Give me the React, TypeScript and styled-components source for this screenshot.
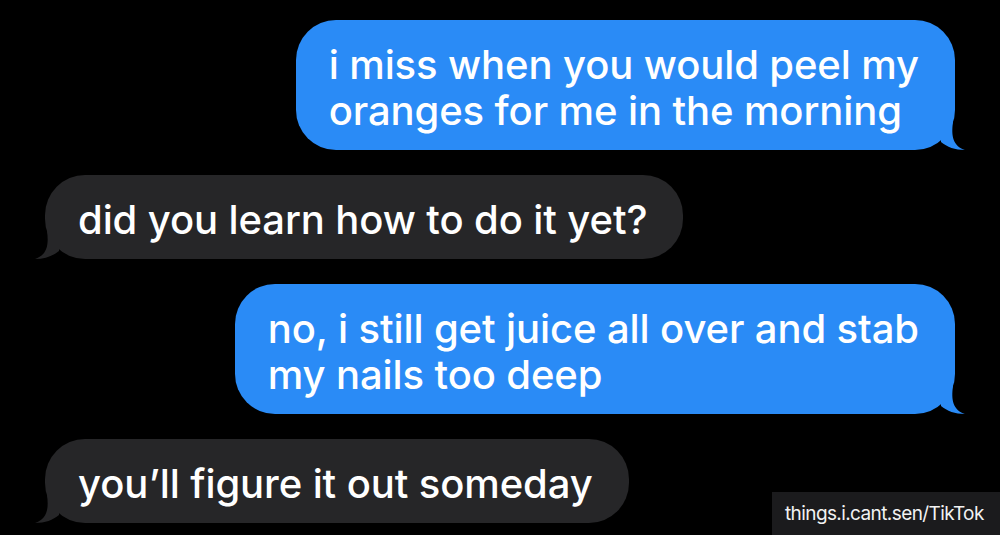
import React from "react";
import styled, { createGlobalStyle } from "styled-components";

const Global = createGlobalStyle`
  html, body { margin: 0; padding: 0; background: #000; }
  body { width: 1000px; height: 535px; overflow: hidden; }
`;

const Screen = styled.div`
  position: relative;
  width: 1000px;
  height: 535px;
  background: #000;
  box-sizing: border-box;
  padding: 20px 45px 0 45px;
  display: flex;
  flex-direction: column;
  gap: 25px;
  font-family: Inter, "Noto Sans", sans-serif;
`;

const Row = styled.div<{ $out?: boolean }>`
  display: flex;
  justify-content: ${(p) => (p.$out ? "flex-end" : "flex-start")};
`;

const Bubble = styled.div<{ $out?: boolean }>`
  position: relative;
  background: ${(p) => (p.$out ? "#2a8bf6" : "#262628")};
  color: #fff;
  border-radius: 40px;
  padding: 22px 36px 16px 33px;
  font-size: 40px;
  line-height: 46px;
  letter-spacing: -0.1px;
  font-weight: 500;
  white-space: nowrap;
`;

const Tail = styled.svg<{ $out?: boolean }>`
  position: absolute;
  bottom: 0;
  width: 24px;
  height: 28px;
  ${(p) => (p.$out ? "right: -10px;" : "left: -10px; transform: scaleX(-1);")}
`;

const Watermark = styled.div`
  position: absolute;
  right: 0;
  bottom: 0;
  width: 228px;
  height: 43px;
  background: #1b1b1d;
  color: #f2f2f2;
  font-family: Inter, "Noto Sans", sans-serif;
  font-size: 19px;
  letter-spacing: -0.6px;
  display: flex;
  align-items: center;
  padding-left: 13px;
  box-sizing: border-box;
`;

const Msg = ({ out, children }: { out?: boolean; children: React.ReactNode }) => (
  <Row $out={out}>
    <Bubble $out={out}>
      {children}
      <Tail $out={out} viewBox="0 0 24 28">
        <path
          d="M0 0 L12 0 C10 14 12 24 24 28 C14 28 6 25 0 20 Z"
          fill={out ? "#2a8bf6" : "#262628"}
        />
      </Tail>
    </Bubble>
  </Row>
);

export default function App() {
  return (
    <>
      <Global />
      <Screen>
        <Msg out>
          i miss when you would peel my
          <br />
          oranges for me in the morning
        </Msg>
        <Msg>did you learn how to do it yet?</Msg>
        <Msg out>
          no, i still get juice all over and stab
          <br />
          my nails too deep
        </Msg>
        <Msg>you’ll figure it out someday</Msg>
        <Watermark>things.i.cant.sen/TikTok</Watermark>
      </Screen>
    </>
  );
}
